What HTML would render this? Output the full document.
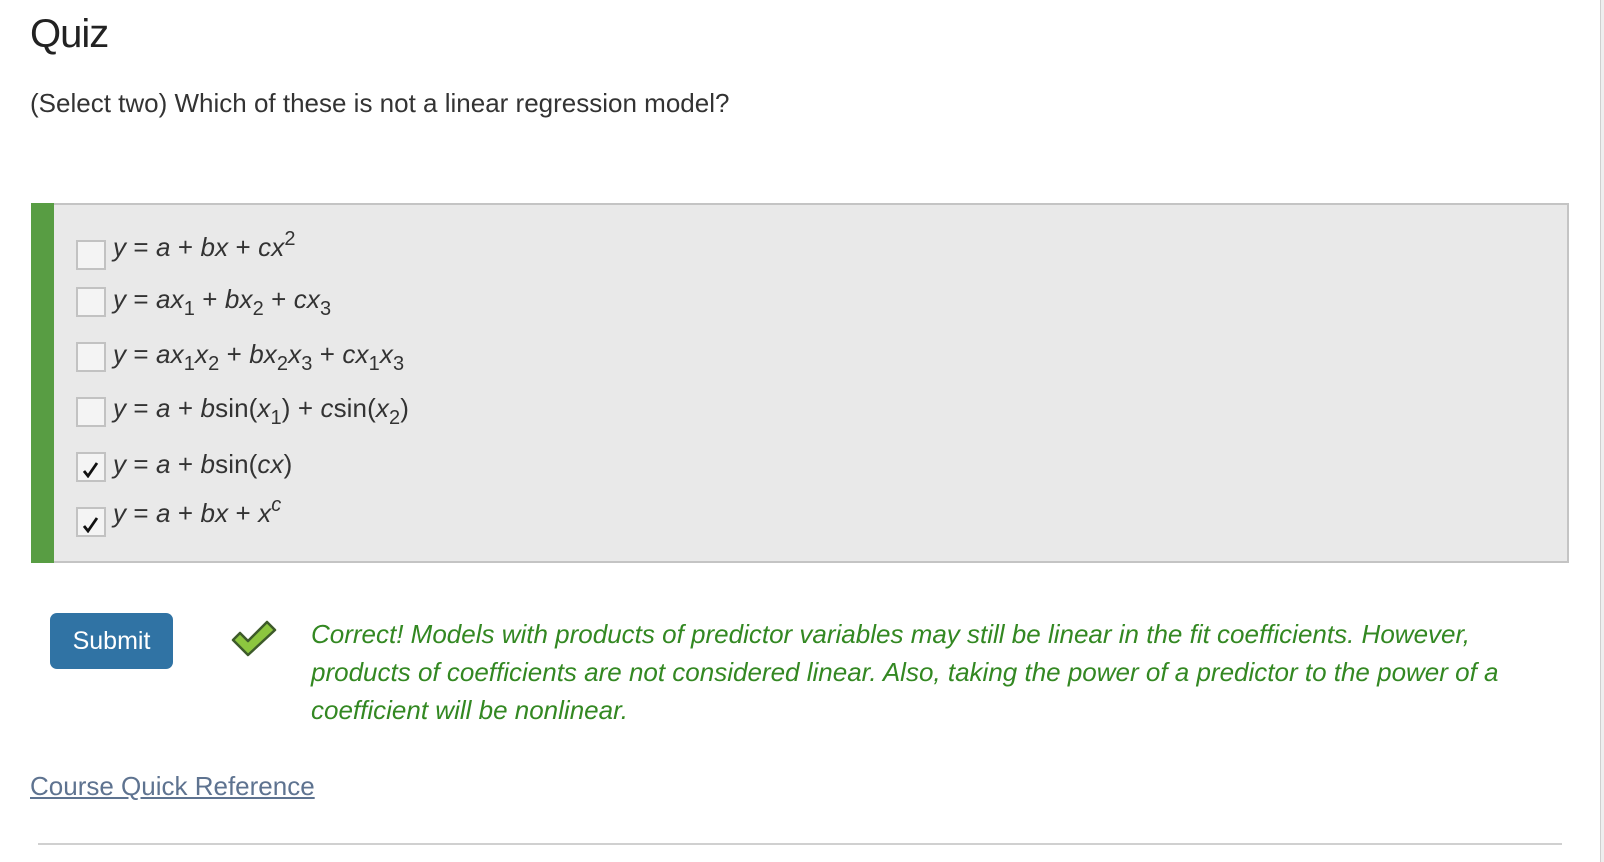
<!DOCTYPE html>
<html><head><meta charset="utf-8"><style>
*{margin:0;padding:0;box-sizing:border-box}
body{width:1604px;height:862px;background:#fff;font-family:"Liberation Sans",Arial,sans-serif;color:#333;position:relative;overflow:hidden}
.abs{position:absolute;white-space:nowrap}
h1{position:absolute;left:30px;top:12px;font-size:40px;font-weight:normal;color:#222;letter-spacing:-1px}
.q{left:30px;top:88px;font-size:26px;color:#333}
.box{position:absolute;left:31px;top:203px;width:1538px;height:360px;background:#e9e9e9;border:2px solid #c4c4c4}
.bar{position:absolute;left:31px;top:203px;width:23px;height:360px;background:#589d43}
.cb{position:absolute;left:76px;width:30px;height:30px;background:#f4f4f4;border:2px solid #c2c2c2}
.cb svg{position:absolute;left:5px;top:8px}
.opt{position:absolute;left:113px;font-size:26px;color:#333;white-space:nowrap;letter-spacing:0.1px}
.opt i{font-style:italic}
sub,sup{font-size:20px}
sub{vertical-align:-7px}
sup{vertical-align:11px}
.btn{position:absolute;left:50px;top:613px;width:123px;height:56px;background:#3073a4;border-radius:7px;color:#fff;font-size:25px;text-align:center;line-height:56px}
.fb{position:absolute;left:311px;top:615px;font-size:26px;font-style:italic;color:#338822;line-height:38px;white-space:nowrap;letter-spacing:0px}
.link{left:30px;top:771px;font-size:26px;color:#5e7390;text-decoration:underline}
.hr{position:absolute;left:38px;top:843px;width:1524px;height:2px;background:#d0d0d0}
.sb{position:absolute;left:1600px;top:0;width:4px;height:862px;background:#eee;border-left:1px solid #cfcfcf}
</style></head><body>
<h1>Quiz</h1>
<div class="abs q">(Select two) Which of these is not a linear regression model?</div>
<div class="box"></div><div class="bar"></div>

<div class="cb" style="top:240px"></div>
<div class="opt" style="top:228px"><i>y</i> = <i>a</i> + <i>bx</i> + <i>cx</i><sup>2</sup></div>
<div class="cb" style="top:287px"></div>
<div class="opt" style="top:284px"><i>y</i> = <i>ax</i><sub>1</sub> + <i>bx</i><sub>2</sub> + <i>cx</i><sub>3</sub></div>
<div class="cb" style="top:342px"></div>
<div class="opt" style="top:339px"><i>y</i> = <i>ax</i><sub>1</sub><i>x</i><sub>2</sub> + <i>bx</i><sub>2</sub><i>x</i><sub>3</sub> + <i>cx</i><sub>1</sub><i>x</i><sub>3</sub></div>
<div class="cb" style="top:397px"></div>
<div class="opt" style="top:393px"><i>y</i> = <i>a</i> + <i>b</i>sin(<i>x</i><sub>1</sub>) + <i>c</i>sin(<i>x</i><sub>2</sub>)</div>
<div class="cb" style="top:452px"><svg width="16" height="16" viewBox="0 0 16 16"><path d="M1 9 L5 14 L14 1" fill="none" stroke="#111" stroke-width="2.8"/></svg></div>
<div class="opt" style="top:449px"><i>y</i> = <i>a</i> + <i>b</i>sin(<i>cx</i>)</div>
<div class="cb" style="top:507px"><svg width="16" height="16" viewBox="0 0 16 16"><path d="M1 9 L5 14 L14 1" fill="none" stroke="#111" stroke-width="2.8"/></svg></div>
<div class="opt" style="top:494px"><i>y</i> = <i>a</i> + <i>bx</i> + <i>x</i><sup><i>c</i></sup></div>

<div class="btn">Submit</div>
<svg class="abs" style="left:230px;top:618px" width="48" height="40" viewBox="0 0 48 40"><path d="M3 22 L10 15 L18 23 L37 4 L45 12 L18 37 Z" fill="#8cc63f" stroke="#3d5a2a" stroke-width="2.5" stroke-linejoin="round"/></svg>
<div class="fb">Correct! Models with products of predictor variables may still be linear in the fit coefficients. However,<br>products of coefficients are not considered linear. Also, taking the power of a predictor to the power of a<br>coefficient will be nonlinear.</div>
<div class="abs link">Course Quick Reference</div>
<div class="hr"></div>
<div class="sb"></div>
</body></html>
